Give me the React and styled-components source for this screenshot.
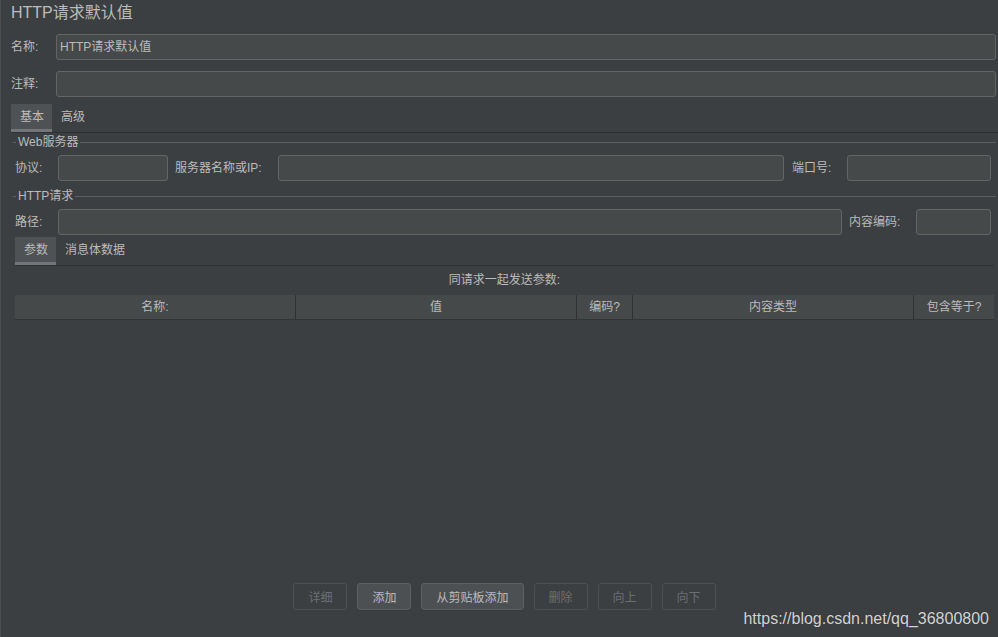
import React from 'react';
import styled, { createGlobalStyle } from 'styled-components';

const GlobalStyle = createGlobalStyle`
	html, body {
		margin: 0;
		padding: 0;
		background: #3c3f41;
	}
	body {
		font-family: "Liberation Sans", "Noto Sans CJK SC", sans-serif;
		font-size: 12px;
		color: #bbbbbb;
	}
`;

const Page = styled.div`
	position: relative;
	width: 998px;
	height: 637px;
	box-sizing: border-box;
	border-left: 1px solid #4b4e50;
	display: flex;
	flex-direction: column;
	overflow: hidden;
	background: #3c3f41;
`;

const Title = styled.div`
	font-size: 16px;
	height: 26px;
	line-height: 26px;
	padding-left: 10px;
	color: #bbbbbb;
`;

const FormRow = styled.div`
	display: flex;
	align-items: center;
	margin-top: ${props => props.$top || 0}px;
	padding: 0 ${props => props.$right || 0}px 0 ${props => props.$left || 0}px;
`;

const Label = styled.span`
	flex: none;
	width: ${props => props.$w}px;
	margin-left: ${props => props.$ml || 0}px;
	white-space: nowrap;
	line-height: 26px;
`;

const Field = styled.div`
	box-sizing: border-box;
	height: 26px;
	line-height: 24px;
	padding: 0 3px;
	background: #45494a;
	border: 1px solid #646464;
	border-radius: 3px;
	color: #bbbbbb;
	flex: ${props => (props.$w ? 'none' : '1')};
	width: ${props => (props.$w ? `${props.$w}px` : 'auto')};
	min-width: 0;
`;

const TabBar = styled.div`
	display: flex;
	margin: ${props => props.$top || 0}px ${props => props.$right || 0}px 0 ${props => props.$left || 0}px;
	border-bottom: 1px solid #2f3133;
`;

const Tab = styled.div`
	height: 28px;
	line-height: 27px;
	padding: 0 8px 0 9px;
	background: ${props => (props.$active ? '#4e5254' : 'transparent')};
	box-shadow: ${props => (props.$active ? 'inset 0 -3px 0 #72767b' : 'none')};
	color: #bbbbbb;
`;

const Group = styled.div`
	margin: 0 2px 0 12px;
`;

const Legend = styled.div`
	display: flex;
	align-items: center;
	height: 14px;
	margin-top: ${props => props.$top || 0}px;

	&::before,
	&::after {
		content: '';
		height: 1px;
		background: #5c5f61;
	}
	&::before {
		width: 3px;
	}
	&::after {
		flex: 1;
	}
`;

const LegendText = styled.span`
	padding: 0 2px;
	line-height: 14px;
`;

const ParamArea = styled.div`
	flex: 1;
	display: flex;
	flex-direction: column;
	margin: 0 4px 0 14px;
`;

const Caption = styled.div`
	height: 29px;
	line-height: 29px;
	text-align: center;
`;

const TableHead = styled.div`
	display: grid;
	grid-template-columns: 281px 281px 56px 281px 1fr;
	height: 25px;
	background: #45494a;
	border-bottom: 1px solid #323436;
	box-sizing: border-box;
`;

const HeadCell = styled.div`
	line-height: 24px;
	text-align: center;
	border-right: ${props => (props.$last ? 'none' : '1px solid #2f3133')};
`;

const TableBody = styled.div`
	flex: 1;
`;

const ButtonRow = styled.div`
	display: flex;
	justify-content: center;
	gap: 10px;
	margin-bottom: 27px;
`;

const Button = styled.button`
	box-sizing: border-box;
	height: 27px;
	padding: 0 14px;
	border-radius: 3px;
	font-family: inherit;
	font-size: 12px;
	border: 1px solid ${props => (props.disabled ? '#4e5153' : '#5e6062')};
	background: ${props => (props.disabled ? 'transparent' : '#4c5052')};
	color: ${props => (props.disabled ? '#6c6f71' : '#bbbbbb')};
	box-shadow: ${props => (props.disabled ? 'none' : '0 1px 0 #35383a')};
`;

const Watermark = styled.div`
	position: absolute;
	right: 9px;
	bottom: 9px;
	font-family: "Liberation Sans", sans-serif;
	font-size: 16px;
	color: #d4d4d4;
	text-shadow: 0 0 1px #2a2a2a;
`;

const columns = ['名称:', '值', '编码?', '内容类型', '包含等于?'];
const buttons = [
	{ text: '详细', disabled: true },
	{ text: '添加' },
	{ text: '从剪贴板添加' },
	{ text: '删除', disabled: true },
	{ text: '向上', disabled: true },
	{ text: '向下', disabled: true },
];

function App() {
	return (
		<Page>
			<GlobalStyle />
			<Title>HTTP请求默认值</Title>

			<FormRow $top={8} $left={10} $right={2}>
				<Label $w={45}>名称:</Label>
				<Field>HTTP请求默认值</Field>
			</FormRow>
			<FormRow $top={11} $left={10} $right={2}>
				<Label $w={45}>注释:</Label>
				<Field />
			</FormRow>

			<TabBar $top={7} $left={10}>
				<Tab $active>基本</Tab>
				<Tab>高级</Tab>
			</TabBar>

			<Group>
				<Legend $top={2}><LegendText>Web服务器</LegendText></Legend>
				<FormRow $top={6} $left={2} $right={5}>
					<Label $w={43}>协议:</Label>
					<Field $w={110} />
					<Label $w={103} $ml={7}>服务器名称或IP:</Label>
					<Field />
					<Label $w={55} $ml={8}>端口号:</Label>
					<Field $w={144} />
				</FormRow>

				<Legend $top={8}><LegendText>HTTP请求</LegendText></Legend>
				<FormRow $top={6} $left={2} $right={5}>
					<Label $w={43}>路径:</Label>
					<Field />
					<Label $w={67} $ml={7}>内容编码:</Label>
					<Field $w={75} />
				</FormRow>
			</Group>

			<TabBar $top={2} $left={14} $right={4}>
				<Tab $active>参数</Tab>
				<Tab>消息体数据</Tab>
			</TabBar>

			<ParamArea>
				<Caption>同请求一起发送参数:</Caption>
				<TableHead>
					{columns.map((c, i) => (
						<HeadCell key={c} $last={i === columns.length - 1}>{c}</HeadCell>
					))}
				</TableHead>
				<TableBody />
				<ButtonRow>
					{buttons.map(b => (
						<Button key={b.text} disabled={b.disabled}>{b.text}</Button>
					))}
				</ButtonRow>
			</ParamArea>

			<Watermark>https://blog.csdn.net/qq_36800800</Watermark>
		</Page>
	);
}

export default App;
